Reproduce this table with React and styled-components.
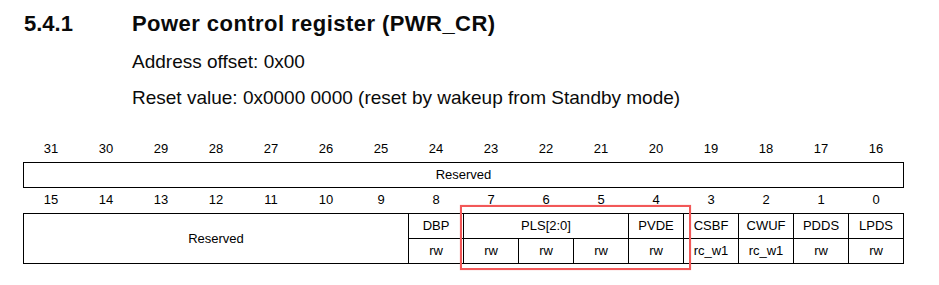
import React from "react";
import styled, { createGlobalStyle } from "styled-components";

const Global = createGlobalStyle`
  html, body { margin: 0; padding: 0; background: #fff; }
  body { font-family: "Liberation Sans", Arial, sans-serif; color: #000; }
`;

const Page = styled.div`
  width: 939px;
  height: 285px;
  overflow: hidden;
  padding-top: 11px;
  box-sizing: border-box;
`;

const HeadingRow = styled.div`
  display: flex;
  padding-left: 24px;
  font-weight: bold;
  font-size: 22px;
  line-height: 26px;
  color: #0a0a0a;
`;

const SectionNumber = styled.span`
  width: 108px;
`;

const Title = styled.span`
  letter-spacing: 0.45px;
`;

const Para = styled.p`
  margin: 0 0 0 132px;
  font-size: 19px;
  line-height: 36px;
  color: #0a0a0a;
  &:first-of-type { margin-top: 7px; }
`;

const Register = styled.div`
  margin: 21px 0 0 23px;
  width: 881px;
  font-size: 13px;
`;

const NumberRow = styled.div`
  display: grid;
  grid-template-columns: repeat(16, 55px);
  padding-left: 1px;
  height: 25px;
  line-height: 24px;
  box-sizing: border-box;
`;

const BitNumber = styled.div`
  text-align: center;
  padding-right: 1px;
`;

const FieldGrid = styled.div`
  position: relative;
  display: grid;
  grid-template-columns: repeat(16, 55px);
  grid-template-rows: repeat(${(p) => p.$rows}, 25px);
  border-left: 1px solid #000;
  border-top: 1px solid #000;
`;

const Cell = styled.div`
  grid-column: span ${(p) => p.$span || 1};
  grid-row: span ${(p) => p.$rowSpan || 1};
  border-right: 1px solid #000;
  border-bottom: 1px solid #000;
  display: flex;
  align-items: center;
  justify-content: center;
  box-sizing: border-box;
  white-space: nowrap;
  padding-bottom: 1px;
`;

const Highlight = styled.div`
  position: absolute;
  left: -4px;
  top: -9px;
  width: 231px;
  height: 65px;
  box-sizing: border-box;
  border: 2.5px solid #f25858;
  box-shadow: 0 0 1px rgba(242, 88, 88, 0.5);
  pointer-events: none;
`;

const HighlightAnchor = styled.div`
  position: absolute;
  left: 440px;
  top: 0;
`;

const range = (from, to) => {
  const out = [];
  for (let i = from; i >= to; i--) out.push(i);
  return out;
};

const lowFields = [
  { name: "DBP", span: 1, access: ["rw"] },
  { name: "PLS[2:0]", span: 3, access: ["rw", "rw", "rw"] },
  { name: "PVDE", span: 1, access: ["rw"] },
  { name: "CSBF", span: 1, access: ["rc_w1"] },
  { name: "CWUF", span: 1, access: ["rc_w1"] },
  { name: "PDDS", span: 1, access: ["rw"] },
  { name: "LPDS", span: 1, access: ["rw"] },
];

export default function App() {
  return (
    <Page>
      <Global />
      <HeadingRow>
        <SectionNumber>5.4.1</SectionNumber>
        <Title>Power control register (PWR_CR)</Title>
      </HeadingRow>
      <Para>Address offset: 0x00</Para>
      <Para>Reset value: 0x0000 0000 (reset by wakeup from Standby mode)</Para>
      <Register>
        <NumberRow>
          {range(31, 16).map((n) => (
            <BitNumber key={n}>{n}</BitNumber>
          ))}
        </NumberRow>
        <FieldGrid $rows={1}>
          <Cell $span={16}>Reserved</Cell>
        </FieldGrid>
        <NumberRow>
          {range(15, 0).map((n) => (
            <BitNumber key={n}>{n}</BitNumber>
          ))}
        </NumberRow>
        <FieldGrid $rows={2}>
          <Cell $span={7} $rowSpan={2}>Reserved</Cell>
          {lowFields.map((f) => (
            <Cell key={f.name} $span={f.span}>{f.name}</Cell>
          ))}
          {lowFields.flatMap((f) =>
            f.access.map((a, i) => <Cell key={f.name + i}>{a}</Cell>)
          )}
          <HighlightAnchor>
            <Highlight />
          </HighlightAnchor>
        </FieldGrid>
      </Register>
    </Page>
  );
}
